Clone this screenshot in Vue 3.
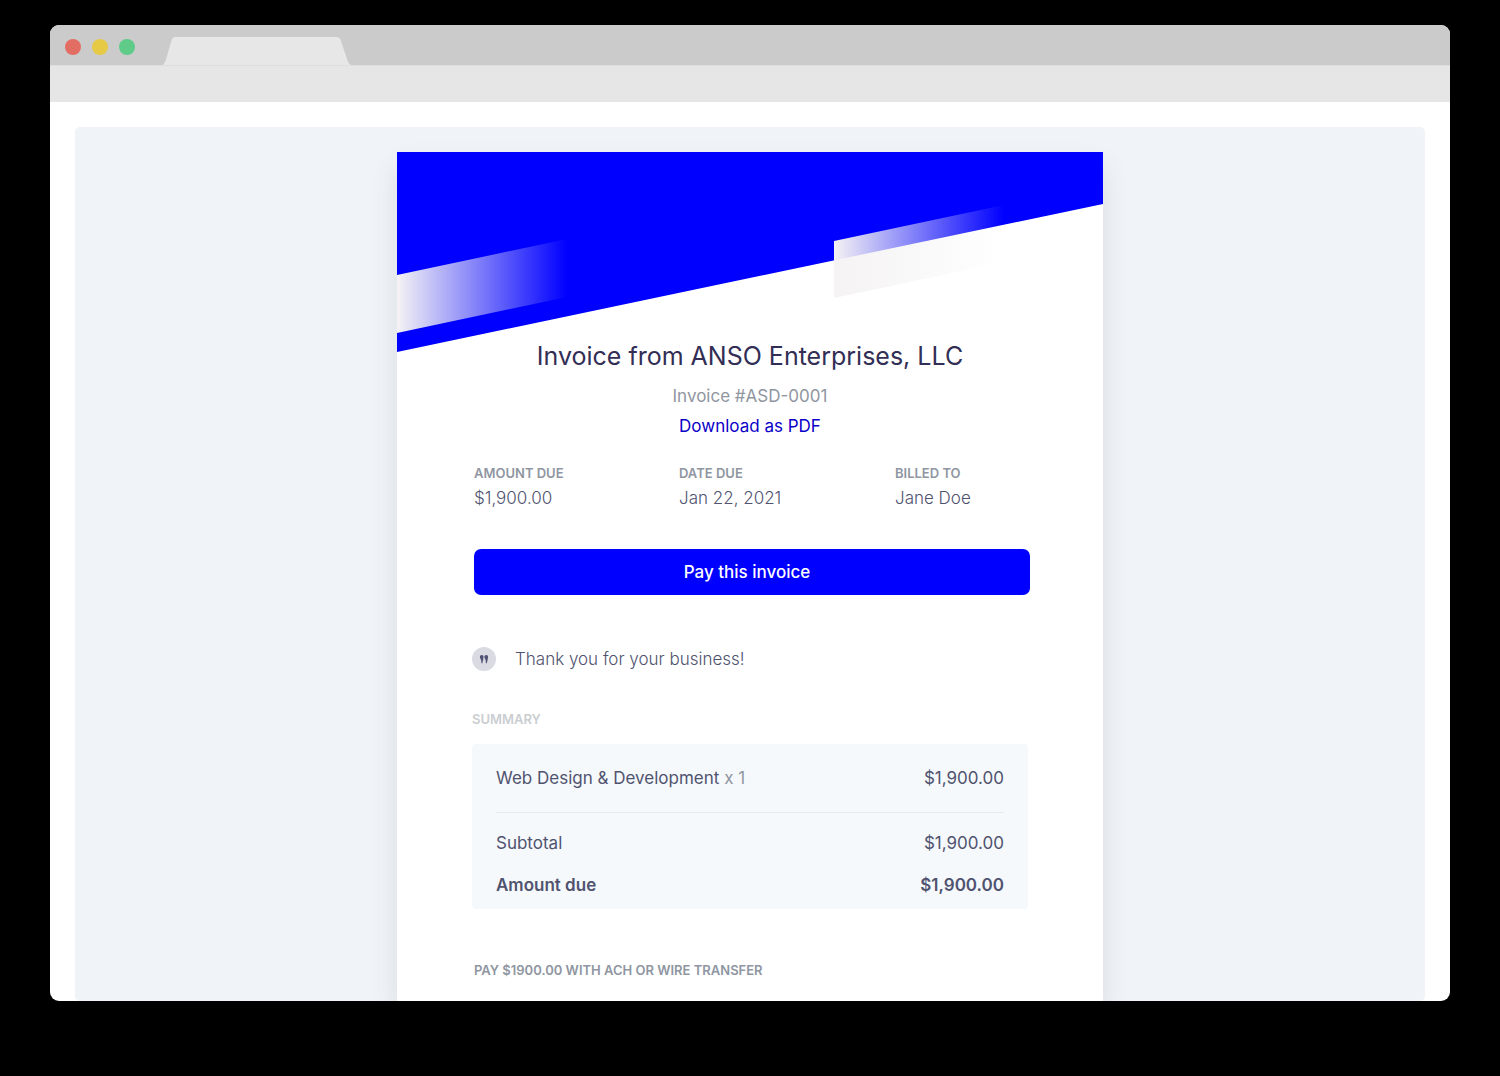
<script setup>
const details = [
  { label: 'Amount due', value: '$1,900.00' },
  { label: 'Date due', value: 'Jan 22, 2021' },
  { label: 'Billed to', value: 'Jane Doe' },
]
const items = [{ name: 'Web Design & Development', qty: 1, total: '$1,900.00' }]
</script>

<template>
  <div class="window">
    <header class="tabs">
      <span class="dot red"></span>
      <span class="dot yellow"></span>
      <span class="dot green"></span>
      <svg class="tab" viewBox="0 0 188 28" aria-hidden="true">
        <path d="M0 28C2 26 3 22 4 19L8 5C9 1 10 0 13 0H173C176 0 177 1 178 4L184 22C185 25 186 27 188 28Z" fill="#e7e7e7" />
      </svg>
    </header>
    <div class="toolbar"></div>
    <div class="viewport">
      <div class="canvas">
        <main class="invoice">
          <svg class="banner" viewBox="0 0 706 200" aria-hidden="true">
            <defs>
              <linearGradient id="fade">
                <stop offset="0" stop-color="#f5f3f3" />
                <stop offset="1" stop-color="#f5f3f3" stop-opacity="0" />
              </linearGradient>
            </defs>
            <path d="M0 0H706V52L0 200Z" fill="#00f" />
            <path d="M0 123L170 87V145L0 181Z" fill="url(#fade)" />
            <path d="M437 89L607 53V110L437 146Z" fill="url(#fade)" />
          </svg>

          <div class="intro">
            <h1>Invoice from ANSO Enterprises, LLC</h1>
            <p class="number">Invoice #ASD-0001</p>
            <a href="#">Download as PDF</a>
          </div>

          <section class="section">
            <dl class="details">
              <div v-for="d in details" :key="d.label">
                <dt class="label">{{ d.label }}</dt>
                <dd>{{ d.value }}</dd>
              </div>
            </dl>
            <button type="button" class="pay">Pay this invoice</button>
          </section>

          <section class="body">
            <div class="memo">
              <svg width="24" height="24" viewBox="0 0 24 24" aria-hidden="true">
                <circle cx="12" cy="12" r="12" fill="#dadae3" />
                <path d="M9.800 8C11.100 8 11.600 8.900 11.500 10.100C11.400 11.900 10.900 14.300 10.300 16.200H9.400C9.400 14.900 9.300 13.700 8.900 12.600C8.300 11.900 7.900 11.100 7.900 10.100C7.900 8.900 8.600 8 9.800 8ZM14.300 8C15.600 8 16.100 8.900 16 10.100C15.900 11.900 15.400 14.300 14.800 16.200H13.900C13.900 14.900 13.800 13.700 13.400 12.600C12.800 11.900 12.400 11.100 12.400 10.100C12.400 8.900 13.100 8 14.300 8Z" fill="#4f5175" />
              </svg>
              <p>Thank you for your business!</p>
            </div>
            <h2 class="label faint">Summary</h2>
            <div class="summary">
              <table>
                <tbody class="lines">
                  <tr v-for="i in items" :key="i.name">
                    <th scope="row">{{ i.name }} <span class="qty">x {{ i.qty }}</span></th>
                    <td>{{ i.total }}</td>
                  </tr>
                </tbody>
                <tbody class="totals">
                  <tr>
                    <th scope="row">Subtotal</th>
                    <td>$1,900.00</td>
                  </tr>
                  <tr class="due">
                    <th scope="row">Amount due</th>
                    <td>$1,900.00</td>
                  </tr>
                </tbody>
              </table>
            </div>
          </section>

          <section class="section">
            <h2 class="label">Pay $1900.00 with ACH or wire transfer</h2>
          </section>
        </main>
      </div>
    </div>
  </div>
</template>

<style>
body {
  background: #000;
}
</style>

<style scoped>
h1, h2, p, dl, dd {
  margin: 0;
}
.window {
  margin: 25px 50px 75px;
  border-radius: 9px;
  overflow: hidden;
  background: #fff;
  font-family: Inter, "Liberation Sans", sans-serif;
  font-size: 17px;
  line-height: 24px;
  color: #50536f;
}
.tabs {
  display: flex;
  align-items: center;
  gap: 11px;
  height: 40px;
  padding-left: 15px;
  background: #cbcbcb;
  border-bottom: 1px solid #dedede;
}
.dot {
  width: 16px;
  height: 16px;
  margin-top: 4px;
  border-radius: 50%;
}
.red { background: #e26d63; }
.yellow { background: #e6ca45; }
.green { background: #5ecb88; }
.tab {
  width: 188px;
  height: 28px;
  margin-left: 17px;
  align-self: flex-end;
}
.toolbar {
  height: 36px;
  background: #e6e6e6;
}
.viewport {
  padding: 25px 25px 0;
}
.canvas {
  padding-top: 25px;
  background: #f0f4f8;
  border-radius: 5px;
  overflow: hidden;
}
.invoice {
  max-width: 706px;
  margin: 0 auto;
  padding-bottom: 23px;
  background: #fff;
  box-shadow: 0 14px 24px rgba(80, 85, 85, 0.14);
}
.banner {
  display: block;
  width: 100%;
}
.intro {
  margin-top: -12px;
  text-align: center;
  position: relative;
}
h1 {
  font-size: 25px;
  line-height: 32px;
  font-weight: 400;
  color: #322e55;
}
.number {
  margin-top: 12px;
  color: #8f96a1;
}
a {
  display: inline-block;
  margin-top: 6px;
  color: #0a00c8;
  text-decoration: none;
}
.section {
  padding: 0 73px 0 77px;
}
.label {
  font-size: 13px;
  line-height: 16px;
  font-weight: 600;
  text-transform: uppercase;
  color: #8f96a1;
}
.faint {
  color: #caced1;
}
.details {
  display: grid;
  grid-template-columns: 205fr 216fr 135fr;
  padding: 27px 0 39px;
}
dd {
  margin-top: 5px;
  font-weight: 300;
}
.pay {
  display: block;
  width: 100%;
  height: 46px;
  padding: 0 10px 0 0;
  border: 0;
  border-radius: 7px;
  background: #00f;
  color: #fff;
  font: 500 17px/24px Inter, "Liberation Sans", sans-serif;
}
.body {
  padding: 52px 75px 53px;
}
.memo {
  display: flex;
  align-items: center;
  gap: 19px;
  margin-bottom: 40px;
  font-weight: 300;
}
.summary {
  margin-top: 17px;
  padding: 22px 24px 12px;
  background: #f5f9fc;
  border-radius: 4px;
}
table {
  width: 100%;
  border-collapse: collapse;
}
th, td {
  padding: 0;
  text-align: left;
  font-weight: 400;
}
td {
  text-align: right;
}
.lines th, .lines td {
  padding-bottom: 22px;
  border-bottom: 1px solid #e6eaee;
}
.totals th, .totals td {
  padding-top: 18px;
}
.totals .due th, .totals .due td {
  font-weight: 600;
}
.qty {
  color: #8f96a1;
}
</style>
